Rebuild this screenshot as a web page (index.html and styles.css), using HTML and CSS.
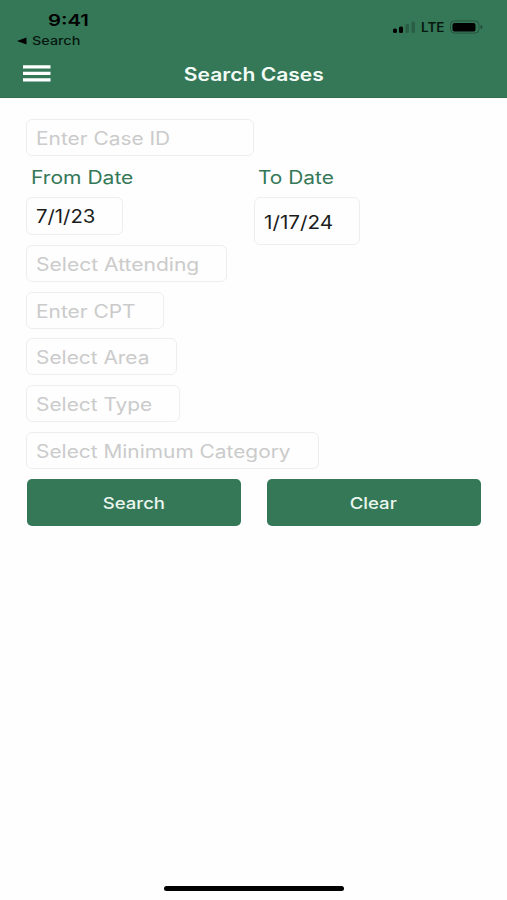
FILE: index.html
```html
<!DOCTYPE html>
<html lang="en">
<head>
<meta charset="utf-8">
<meta name="viewport" content="width=device-width, initial-scale=1">
<title>Search Cases</title>
<link rel="stylesheet" href="styles.css">
</head>
<body>
<div class="screen">
  <header class="header">
    <div class="status">
      <div class="status-left">
        <div class="time"><span class="wide">9:41</span></div>
        <div class="back">
          <svg width="10" height="8" viewBox="0 0 10 8"><path d="M0 4 9.500 0.500V7.500Z"/></svg>
          <span class="wide">Search</span>
        </div>
      </div>
      <div class="status-right">
        <svg class="signal" width="24" height="14" viewBox="0 0 24 14">
          <rect x="0" y="8.500" width="4" height="4.500" rx="1.500"/>
          <rect x="6" y="6.500" width="4" height="6.500" rx="1.500"/>
          <g opacity=".2"><rect x="12.500" y="4" width="3.500" height="9" rx="1.200"/><rect x="18.500" y="1.500" width="3.500" height="11.500" rx="1.200"/></g>
        </svg>
        <span class="lte"><span class="wide">LTE</span></span>
        <svg class="battery" width="33" height="14" viewBox="0 0 33 14">
          <rect x=".5" y=".9" width="28.500" height="12.200" rx="4" fill="none" stroke="#000" stroke-opacity=".3"/>
          <rect x="2.500" y="2.900" width="23" height="8.600" rx="2"/>
          <path d="M30.500 5q2 .5 2 2t-2 2Z" opacity=".4"/>
        </svg>
      </div>
    </div>
    <div class="nav">
      <svg class="menu" width="28" height="17" viewBox="0 0 28 17"><path d="M0 .2h27.500v3.400H0zM0 6.700h27.500v3.400H0zM0 13.200h27.500v3.400H0z"/></svg>
      <h1 class="title"><span class="wide">Search Cases</span></h1>
    </div>
  </header>
  <main class="form">
    <div class="field case-id"><span class="wide">Enter Case ID</span></div>
    <div class="dates">
      <div class="date-col">
        <div class="label"><span class="wide">From Date</span></div>
        <div class="field value from"><span class="wide">7/1/23</span></div>
      </div>
      <div class="date-col">
        <div class="label to-label"><span class="wide">To Date</span></div>
        <div class="field value to"><span class="wide">1/17/24</span></div>
      </div>
    </div>
    <div class="field attending"><span class="wide">Select Attending</span></div>
    <div class="field cpt"><span class="wide">Enter CPT</span></div>
    <div class="field area"><span class="wide">Select Area</span></div>
    <div class="field type"><span class="wide">Select Type</span></div>
    <div class="field category"><span class="wide">Select Minimum Category</span></div>
    <div class="actions">
      <button class="button"><span class="wide">Search</span></button>
      <button class="button"><span class="wide">Clear</span></button>
    </div>
  </main>
  <div class="home"></div>
</div>
</body>
</html>
```
FILE: styles.css
```css
* { box-sizing: border-box; }
body {
  margin: 0;
  background: #fefefe;
  font-family: Inter, "Liberation Sans", sans-serif;
}
.screen {
  width: 507px;
  height: 900px;
  display: flex;
  flex-direction: column;
  overflow: hidden;
}
.header {
  height: 98px;
  flex: none;
  background: #357858;
  border-bottom: 1px solid #2f6b4e;
}
.wide {
  display: inline-block;
  white-space: nowrap;
  transform: scaleX(1.16);
  transform-origin: left center;
}
.status {
  display: flex;
  justify-content: space-between;
  height: 50px;
}
.status-left { padding: 9px 0 0 17px; }
.time {
  padding-left: 31px;
  font-size: 16px;
  font-weight: 600;
  line-height: 22px;
}
.time .wide { transform: scaleX(1.27); }
.back {
  display: flex;
  align-items: center;
  gap: 5px;
  margin-top: 1px;
  color: #06170f;
  font-size: 12px;
  font-weight: 500;
  line-height: 17px;
}
.back .wide { transform: scaleX(1.2); }
.status-right {
  display: flex;
  align-items: center;
  width: 114px;
  height: 20px;
  margin-top: 17px;
}
.lte {
  width: 29px;
  margin: 2px 0 0 4px;
  color: #06170f;
  font-size: 12.5px;
  font-weight: 600;
  line-height: 20px;
}
.lte .wide { transform: scaleX(1.08); }
.nav {
  display: grid;
  grid-template-columns: 28px 1fr 28px;
  align-items: center;
  height: 46px;
  padding: 0 23px;
}
.menu { fill: #fff; }
.title {
  margin: 3px 0 0;
  color: #f3fbf6;
  font-size: 18px;
  font-weight: 600;
  line-height: 24px;
  text-align: center;
}
.title .wide, .button .wide { transform-origin: center; }
.title .wide { transform: scaleX(1.17); }
.form {
  display: flex;
  flex-direction: column;
  align-items: flex-start;
  gap: 9.8px;
  padding: 21px 26px 0;
}
.field {
  height: 37px;
  padding-left: 9px;
  border: 1px solid #eee;
  border-radius: 6px;
  color: #cbcbcb;
  font-size: 18px;
  line-height: 37px;
}
.dates {
  display: grid;
  grid-template-columns: 228px 228px;
  height: 70px;
  margin-top: -0.8px;
}
.label {
  height: 32px;
  padding: 1px 0 0 5px;
  color: #357858;
  font-size: 18px;
  line-height: 23px;
}
.label .wide { transform: scaleX(1.17); }
.to-label { padding-left: 4px; }
.to-label .wide { transform: scaleX(1.16); }
.value {
  padding-left: 8.5px;
  color: #1c1c1c;
}
.value .wide { transform: scaleX(1.13); }
.case-id { width: 228px; }
.from { width: 97px; height: 38px; }
.to { width: 106px; height: 48px; line-height: 49px; }
.to .wide { transform: scaleX(1.15); }
.attending { width: 201px; }
.attending .wide { transform: scaleX(1.17); }
.cpt { width: 138px; }
.area { width: 151px; }
.type { width: 154px; }
.category { width: 293px; }
.actions {
  display: grid;
  grid-template-columns: 1fr 1fr;
  gap: 25.5px;
  width: 454.5px;
  margin-left: 0.5px;
}
.button {
  height: 47px;
  padding: 0;
  border: 0;
  border-radius: 5px;
  background: #357858;
  color: #e9f6ee;
  font: 500 16px/48px Inter, "Liberation Sans", sans-serif;
}
.home {
  width: 180px;
  height: 5px;
  margin: auto auto 9px;
  border-radius: 3px;
  background: #000;
}
```
